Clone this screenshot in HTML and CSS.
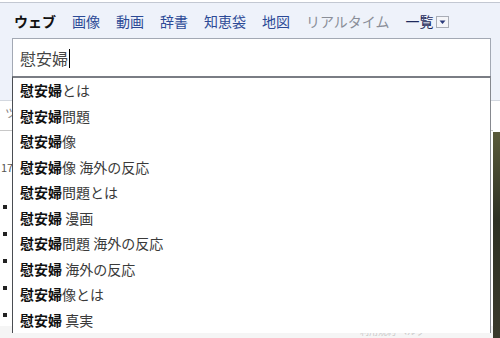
FILE: index.html
```html
<!DOCTYPE html>
<html lang="ja">
<head>
<meta charset="utf-8">
<link rel="stylesheet" href="styles.css">
</head>
<body>
<div class="page">
  <div class="header">
    <nav class="tabs">
      <span class="tab current">ウェブ</span>
      <a class="tab">画像</a>
      <a class="tab">動画</a>
      <a class="tab">辞書</a>
      <a class="tab">知恵袋</a>
      <a class="tab">地図</a>
      <a class="tab dim">リアルタイム</a>
      <a class="tab more">一覧<span class="more-btn"><svg width="13" height="12" viewBox="0 0 13 12"><rect x="0.5" y="0.5" width="12" height="11" fill="#f4f5f8" stroke="#a9adb6"/><path d="M3.5 4.5h6l-3 3.5z" fill="#2a3a7a"/></svg></span></a>
    </nav>
    <div class="search-wrap">
      <div class="search-box"><span class="query">慰安婦</span><span class="caret"></span></div>
      <ul class="suggest">
        <li><b>慰安婦</b>とは</li>
        <li><b>慰安婦</b>問題</li>
        <li><b>慰安婦</b>像</li>
        <li><b>慰安婦</b>像 海外の反応</li>
        <li><b>慰安婦</b>問題とは</li>
        <li><b>慰安婦</b> 漫画</li>
        <li><b>慰安婦</b>問題 海外の反応</li>
        <li><b>慰安婦</b> 海外の反応</li>
        <li><b>慰安婦</b>像とは</li>
        <li><b>慰安婦</b> 真実</li>
      </ul>
    </div>
    <div class="options"></div>
  </div>
  <div class="content">
    <div class="main">
      <div class="tools">ツール</div>
      <div class="count">17件</div>
      <ul class="results">
        <li>結果</li>
        <li>結果</li>
        <li>結果</li>
        <li>結果</li>
        <li>結果</li>
      </ul>
      <div class="foot">利用規約 ヘルプ</div>
    </div>
    <div class="side"><div class="photo"></div></div>
  </div>
</div>
</body>
</html>
```
FILE: styles.css
```css
html, body {
  margin: 0;
  padding: 0;
  background: #fff;
}
body {
  font-family: "Noto Sans CJK JP", "Noto Sans", sans-serif;
  width: 500px;
  height: 338px;
  overflow: hidden;
}
.page {
  padding-top: 2px;
}
.header {
  background: #eef2fa;
  border-top: 1px solid #c3c8d2;
  border-bottom: 1px solid #d3d8e0;
}
.tabs {
  display: flex;
  align-items: center;
  height: 35px;
  padding-left: 14px;
  gap: 16px;
  font-size: 14px;
  line-height: 16px;
}
.tab {
  color: #2c4a96;
  display: flex;
  align-items: center;
}
.tab.current {
  color: #111;
  font-weight: 700;
}
.tab.dim {
  color: #8a8e98;
}
.tab.more {
  color: #1e2a5c;
  gap: 2px;
}
.more-btn {
  display: flex;
  margin-top: 2px;
}
.search-wrap {
  position: relative;
  padding-left: 12px;
}
.search-box {
  box-sizing: border-box;
  width: 479px;
  height: 39px;
  background: #fff;
  border: 1px solid #a3a9b4;
  padding-left: 7px;
  display: flex;
  align-items: center;
  font-size: 16px;
  color: #444;
}
.caret {
  display: inline-block;
  width: 1px;
  height: 19px;
  background: #000;
  margin-left: 1px;
  margin-top: 2px;
}
.suggest {
  position: absolute;
  left: 12px;
  top: 38px;
  box-sizing: border-box;
  width: 479px;
  height: 257px;
  margin: 0;
  padding: 0;
  list-style: none;
  background: #fff;
  border-top: 2px solid #7a7d84;
  border-left: 1px solid #4a4d52;
  border-right: 1px solid #86898f;
  z-index: 2;
}
.suggest li {
  height: 25.5px;
  line-height: 25.5px;
  padding-left: 7px;
  font-size: 14px;
  color: #3a3a3a;
  white-space: nowrap;
}
.suggest b {
  color: #111;
  font-weight: 700;
}
.options {
  height: 23px;
}
.content {
  display: flex;
}
.main {
  flex: 1;
}
.tools {
  height: 29px;
  line-height: 24px;
  padding-left: 5px;
  font-size: 12px;
  color: #888;
  border-bottom: 1px solid #c8c8c8;
}
.count {
  margin-top: 28px;
  padding-left: 1px;
  font-size: 11px;
  color: #555;
  height: 16px;
}
.results {
  margin: 18px 0 0;
  padding: 0;
  list-style: none;
}
.results li {
  height: 27px;
  display: flex;
  align-items: center;
  padding-left: 3px;
  font-size: 12px;
  color: #333;
}
.results li::before {
  content: "";
  width: 4px;
  height: 4px;
  background: #222;
  margin-right: 5px;
}
.foot {
  margin-top: -2px;
  padding-left: 360px;
  font-size: 9px;
  line-height: 12px;
  color: #c8c8c8;
  background: #f5f5f5;
  height: 12px;
}
.side {
  width: 7px;
}
.photo {
  margin-top: 31px;
  height: 220px;
  background: linear-gradient(180deg, #5a5a3a, #2e3224 40%, #3b3a2c);
}
```
